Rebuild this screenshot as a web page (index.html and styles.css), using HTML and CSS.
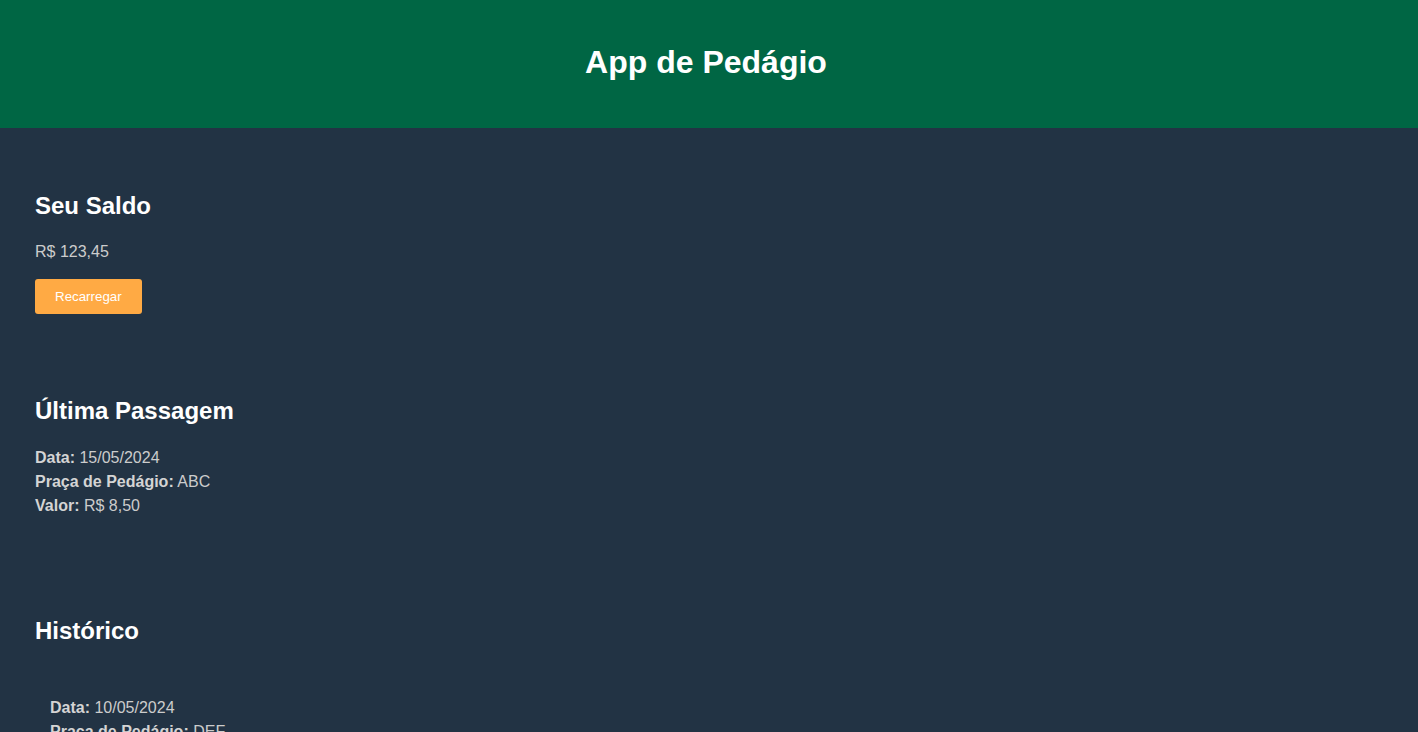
FILE: index.html
```html
<!DOCTYPE html>
<html lang="pt-BR">
<head>
<meta charset="utf-8">
<title>App de Pedágio</title>
<link rel="stylesheet" href="styles.css">
</head>
<body>
<header class="top">
  <h1 class="title">App de Pedágio</h1>
</header>
<main class="content">
  <section class="card saldo">
    <h2 class="card-title">Seu Saldo</h2>
    <p class="balance">R$ 123,45</p>
    <button class="btn">Recarregar</button>
  </section>
  <section class="card ultima">
    <h2 class="card-title">Última Passagem</h2>
    <div class="details">
      <div><strong>Data:</strong> 15/05/2024</div>
      <div><strong>Praça de Pedágio:</strong> ABC</div>
      <div><strong>Valor:</strong> R$ 8,50</div>
    </div>
  </section>
  <section class="card historico">
    <h2 class="card-title">Histórico</h2>
    <ul class="history">
      <li class="history-item">
        <div><strong>Data:</strong> 10/05/2024</div>
        <div><strong>Praça de Pedágio:</strong> DEF</div>
        <div><strong>Valor:</strong> R$ 7,20</div>
      </li>
      <li class="history-item">
        <div><strong>Data:</strong> 05/05/2024</div>
        <div><strong>Praça de Pedágio:</strong> GHI</div>
        <div><strong>Valor:</strong> R$ 9,00</div>
      </li>
    </ul>
  </section>
</main>
</body>
</html>
```
FILE: styles.css
```css
html, body {
  margin: 0;
  padding: 0;
}
body {
  background: #223344;
  color: #cccccc;
  font-family: "Liberation Sans", Arial, sans-serif;
  font-size: 16px;
}
.top {
  background: #006644;
  padding: 44px 6px 47px 0;
  text-align: center;
}
.title {
  margin: 0;
  color: #ffffff;
  font-size: 32px;
  line-height: 37px;
  font-weight: bold;
}
.content {
  padding: 64px 35px 40px;
}
.card-title {
  margin: 0;
  color: #ffffff;
  font-size: 24px;
  line-height: 27.6px;
  font-weight: bold;
}
.balance {
  margin: 23px 0 18px;
  line-height: 18.4px;
}
.btn {
  display: block;
  background: #ffaa44;
  color: #ffffff;
  border: none;
  border-radius: 3px;
  padding: 0 20px;
  height: 35px;
  font-family: "Liberation Sans", Arial, sans-serif;
  font-size: 13.333px;
  cursor: pointer;
}
.ultima {
  margin-top: 83px;
}
.details {
  margin-top: 21px;
  line-height: 24px;
}
.details strong, .history strong {
  color: #d4d4d4;
}
.historico {
  margin-top: 99px;
}
.history {
  list-style: none;
  margin: 52px 0 0;
  padding: 0;
  line-height: 24px;
}
.history-item {
  padding: 0 15px;
  margin-bottom: 30px;
}
```
